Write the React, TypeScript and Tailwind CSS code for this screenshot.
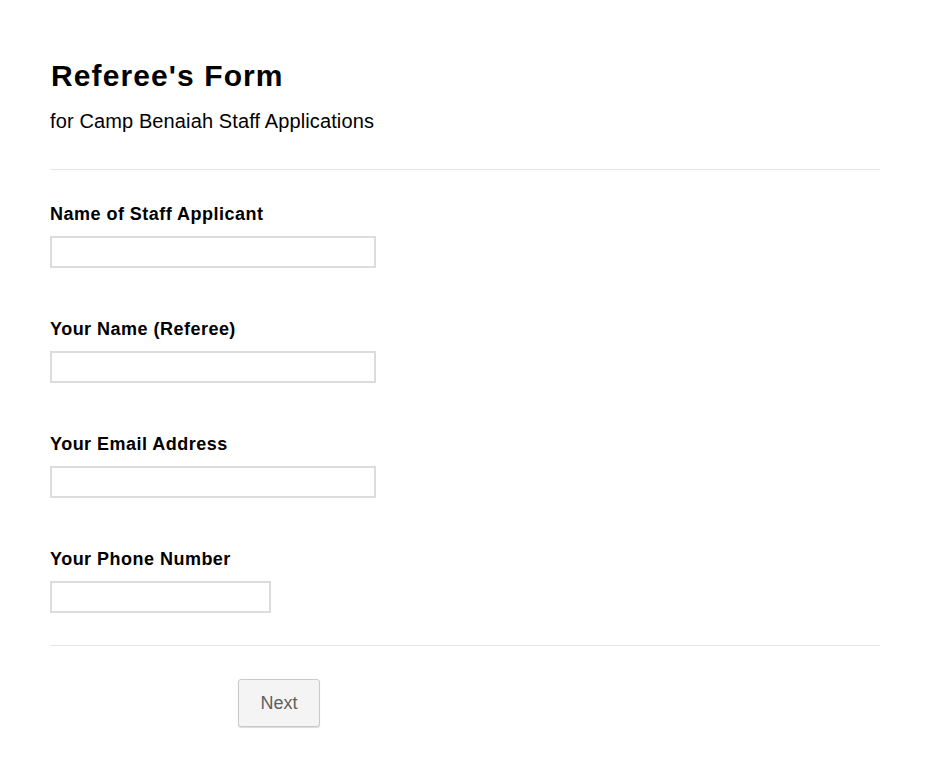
import React from "react";

const fields = [
  { label: "Name of Staff Applicant", w: "w-[326px]" },
  { label: "Your Name (Referee)", w: "w-[326px]" },
  { label: "Your Email Address", w: "w-[326px]" },
  { label: "Your Phone Number", w: "w-[221px]" },
];

export default function App() {
  return (
    <div className="min-h-[760px] bg-white text-black" style={{ fontFamily: '"Liberation Sans", Arial, sans-serif' }}>
      <div className="w-[830px] ml-[50px] pt-[57px]">
        <h1 className="text-[30px] leading-[38px] font-bold pl-[1px] tracking-[1.1px]">Referee's Form</h1>
        <p className="text-[20px] leading-[24px] mt-[14px] tracking-[0.12px]">for Camp Benaiah Staff Applications</p>
        <div className="h-px bg-[#e6e6e6] mt-[36px]" />
        <div className="flex flex-col">
          {fields.map((f, i) => (
            <div key={i} className={i === 0 ? "mt-[33px]" : "mt-[50px]"}>
              <label className="block text-[18px] leading-[22px] font-bold tracking-[0.48px]">{f.label}</label>
              <input
                type="text"
                className={`block ${f.w} h-[32px] mt-[11px] border-2 border-[#dcdcdc] bg-white outline-none`}
              />
            </div>
          ))}
        </div>
        <div className="h-px bg-[#e6e6e6] mt-[32px]" />
        <div className="mt-[33px] pl-[188px]">
          <button className="w-[82px] h-[48px] rounded-[3px] border border-[#c9c9c9] bg-[#f4f4f4] text-[#5f5f5f] text-[18px] shadow-[0_1px_1px_rgba(0,0,0,0.15)]">
            Next
          </button>
        </div>
      </div>
    </div>
  );
}
